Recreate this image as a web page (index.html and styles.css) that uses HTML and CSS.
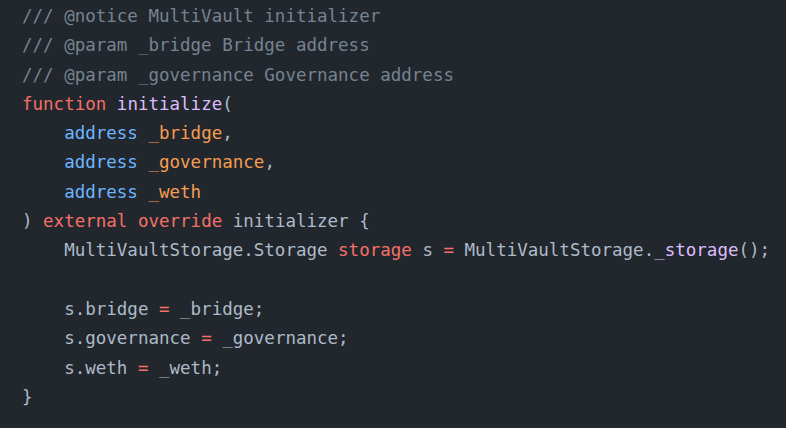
FILE: index.html
```html
<!DOCTYPE html>
<html>
<head>
<meta charset="utf-8">
<link rel="stylesheet" href="styles.css">
</head>
<body>
<pre class="code"><code><span class="c">/// @notice MultiVault initializer</span>
<span class="c">/// @param _bridge Bridge address</span>
<span class="c">/// @param _governance Governance address</span>
<span class="k">function</span> <span class="f">initialize</span>(
    <span class="t">address</span> <span class="v">_bridge</span>,
    <span class="t">address</span> <span class="v">_governance</span>,
    <span class="t">address</span> <span class="v">_weth</span>
) <span class="k">external</span> <span class="k">override</span> initializer {
    MultiVaultStorage.Storage <span class="k">storage</span> s <span class="k">=</span> MultiVaultStorage.<span class="f">_storage</span>();

    s.bridge <span class="k">=</span> _bridge;
    s.governance <span class="k">=</span> _governance;
    s.weth <span class="k">=</span> _weth;
}</code></pre>
</body>
</html>
```
FILE: styles.css
```css
html, body {
  margin: 0;
  padding: 0;
  background: #22272e;
  width: 786px;
  height: 428px;
  overflow: hidden;
}
.code {
  margin: 0;
  padding: 2px 0 0 22px;
  font-family: "DejaVu Sans Mono", monospace;
  font-size: 17.5px;
  line-height: 29.3px;
  color: #adbac7;
}
.c { color: #768390; }
.k { color: #f47067; }
.f { color: #dcbdfb; }
.t { color: #6cb6ff; }
.v { color: #f69d50; }
```
